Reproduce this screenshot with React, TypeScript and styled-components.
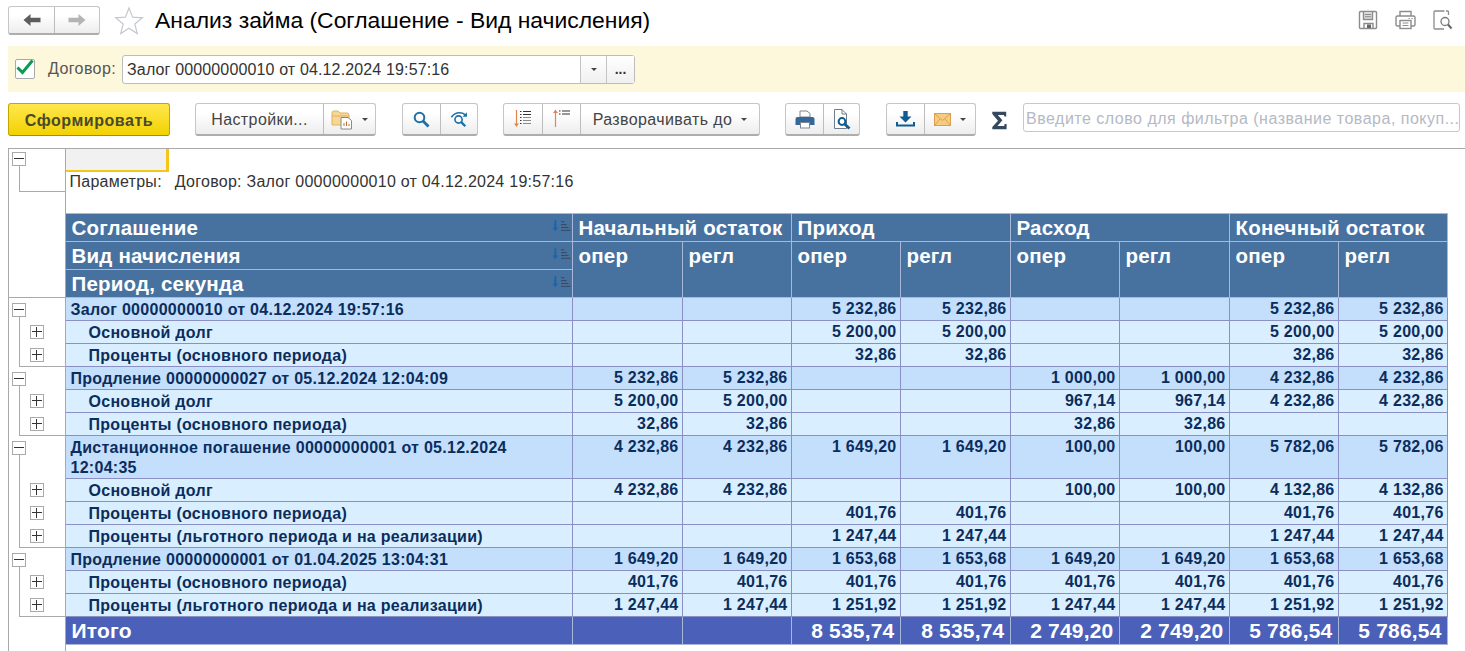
import styled, { createGlobalStyle } from "styled-components";

const GlobalStyle = createGlobalStyle`
    html, body {
        margin: 0;
        padding: 0;
        height: 100%;
        background: #fff;
        overflow: hidden;
    }
    body, button, input {
        font-family: "Liberation Sans", Arial, sans-serif;
    }
`;

const Page = styled.div`
    width: 1465px;
    height: 651px;
    display: flex;
    flex-direction: column;
    overflow: hidden;
`;

const TitleBar = styled.header`
    height: 46px;
    flex: none;
    display: flex;
    align-items: flex-start;
    padding: 6px 12px 0 8px;
    box-sizing: border-box;
`;

const Title = styled.h1`
    margin: 0 0 0 11px;
    font-size: 22.9px;
    line-height: 29px;
    font-weight: 400;
    color: #000;
    white-space: nowrap;
`;

const TitleIcons = styled.div`
    margin-left: auto;
    display: flex;
    gap: 17px;
    padding-top: 4px;
`;

const FilterBand = styled.div`
    height: 46px;
    flex: none;
    margin-left: 8px;
    background: #fdf8dc;
    display: flex;
    align-items: center;
    padding-left: 7px;
    box-sizing: border-box;
`;

const CheckBox = styled.span`
    width: 18px;
    height: 18px;
    border: 1px solid #a9a9a9;
    border-radius: 2px;
    background: #fff;
    display: flex;
    align-items: center;
    justify-content: center;
`;

const FilterLabel = styled.label`
    margin-left: 13px;
    font-size: 16px;
    letter-spacing: 0.4px;
    color: #555;
    white-space: nowrap;
`;

const FilterField = styled.div`
    margin-left: 6px;
    width: 513px;
    height: 29px;
    box-sizing: border-box;
    display: flex;
    background: #fff;
    border: 1px solid #bcbcbc;
    border-radius: 3px;
`;

const FilterValue = styled.div`
    flex: 1;
    padding-left: 4px;
    font-size: 16px;
    letter-spacing: 0.14px;
    line-height: 27px;
    color: #333;
`;

const FieldButton = styled.div<{ $width: number }>`
    width: ${props => props.$width}px;
    border-left: 1px solid #c4c4c4;
    background: linear-gradient(#fff, #f0f0f0);
    display: flex;
    align-items: center;
    justify-content: center;
    color: #333;
    font-size: 14px;
    font-weight: 700;
    line-height: 20px;
`;

const Toolbar = styled.div`
    height: 33px;
    flex: none;
    margin-top: 11px;
    padding-left: 8px;
    display: flex;
    align-items: stretch;
`;

const MainButton = styled.button`
    width: 162px;
    padding: 2px 0 0;
    border: 1px solid #c5a500;
    border-bottom-color: #a78c00;
    border-radius: 3px;
    background: linear-gradient(#ffe74d, #f2d200);
    color: #4a4a2a;
    font-size: 16px;
    letter-spacing: 0.55px;
    font-weight: 700;
`;

const ButtonGroup = styled.div<{ $left: number }>`
    margin-left: ${props => props.$left}px;
    display: flex;
    border: 1px solid #c6c6c6;
    border-bottom: 2px solid #adadad;
    border-radius: 3px;
    background: linear-gradient(#fff 30%, #ededed);
    box-sizing: border-box;
`;

const Segment = styled.div<{ $width: number }>`
    width: ${props => props.$width}px;
    display: flex;
    align-items: center;
    justify-content: center;
    gap: 9px;
    color: #444;
    font-size: 16px;
    letter-spacing: 0.4px;
    white-space: nowrap;
    box-sizing: border-box;
    & + & {
        border-left: 1px solid #bdbdbd;
    }
`;

const SegmentText = styled.span`
    padding-top: 2px;
`;

const Caret = styled.i`
    display: block;
    width: 0;
    height: 0;
    border-left: 3px solid transparent;
    border-right: 3px solid transparent;
    border-top: 3px solid #444;
`;

const SigmaBox = styled.div`
    margin-left: 14px;
    padding-top: 2px;
    width: 18px;
    display: flex;
    align-items: center;
    justify-content: center;
`;

const SearchInput = styled.div`
    margin-left: 15px;
    width: 437px;
    height: 29px;
    align-self: flex-start;
    box-sizing: border-box;
    border: 1px solid #c8c8c8;
    border-radius: 3px;
    padding-left: 2px;
    font-size: 16px;
    line-height: 29px;
    color: #b5b9c4;
    letter-spacing: 0.5px;
    white-space: nowrap;
    overflow: hidden;
`;

const Sheet = styled.div`
    margin: 12px 0 0 8px;
    flex: 1;
    min-height: 0;
    border-top: 1px solid #a9a9a9;
    border-left: 1px solid #a9a9a9;
    overflow: hidden;
`;

const Grid = styled.table`
    border-collapse: collapse;
    table-layout: fixed;
    width: 1438px;
`;

const Gutter = styled.td<{ $h: number; $top?: boolean }>`
    position: relative;
    height: ${props => props.$h}px;
    padding: 0;
    box-sizing: border-box;
    border-right: 1px solid #a9a9a9;
    border-top: ${props => (props.$top ? "1px solid #a9a9a9" : "none")};
`;

const TreeBox = styled.span<{ $x: number; $y: number }>`
    position: absolute;
    left: ${props => props.$x}px;
    top: ${props => props.$y}px;
    width: 14px;
    height: 14px;
    box-sizing: border-box;
    border: 1px solid #a9a9a9;
    background: #fff;
    z-index: 1;
    display: block;
    &::before {
        content: "";
        position: absolute;
        left: 1px;
        right: 1px;
        top: 5px;
        height: 1px;
        background: #333;
    }
`;

const PlusBox = styled(TreeBox)`
    &::after {
        content: "";
        position: absolute;
        top: 1px;
        bottom: 1px;
        left: 5px;
        width: 1px;
        background: #333;
    }
`;

const TreeLine = styled.span<{ $from: number; $to: number; $corner?: boolean }>`
    position: absolute;
    left: 10px;
    right: 0;
    top: ${props => props.$from}px;
    height: ${props => props.$to - props.$from}px;
    box-sizing: border-box;
    border-left: 1px solid #a9a9a9;
    border-bottom: ${props => (props.$corner ? "1px solid #a9a9a9" : "none")};
    ${props => (props.$corner ? "" : "right: auto;")}
`;

const ParamsCell = styled.td`
    height: 64px;
    padding: 0;
    vertical-align: top;
`;

const Tab = styled.div`
    width: 100px;
    height: 21px;
    background: #f1f1f1;
    border-right: 3px solid #f5c518;
    border-bottom: 2px solid #f5c518;
`;

const ParamsLine = styled.div`
    margin-top: 1px;
    padding-left: 4px;
    display: flex;
    gap: 13px;
    font-size: 16px;
    letter-spacing: 0.26px;
    line-height: 17px;
    color: #333;
`;

const HeadCell = styled.th<{ $h?: number }>`
    height: ${props => props.$h ?? 27}px;
    padding: 0 4px 0 6px;
    background: #47729f;
    border: 1px solid #a9b8d8;
    color: #fff;
    font-size: 20.5px;
    letter-spacing: 0.2px;
    line-height: 22px;
    font-weight: 700;
    text-align: left;
    vertical-align: top;
    white-space: nowrap;
    overflow: hidden;
`;

const HeadInner = styled.div`
    display: flex;
    justify-content: space-between;
    align-items: flex-start;
    margin-right: -3px;
    padding-top: 3px;
`;

const HeadText = styled.div`
    padding-top: 3px;
`;

const DataRow = styled.tr<{ $group?: boolean }>`
    td.data {
        background: ${props => (props.$group ? "#c4dffc" : "#d9eeff")};
    }
`;

const LabelCell = styled.td<{ $child?: boolean; $h: number }>`
    height: ${props => props.$h}px;
    padding: 1px ${props => (props.$child ? "4px" : "60px")} 0 ${props => (props.$child ? "23px" : "5px")};
    border: 1px solid #8a90c4;
    color: #0b2d5c;
    font-size: 16px;
    letter-spacing: 0.28px;
    line-height: 20px;
    font-weight: 700;
    box-sizing: border-box;
`;

const NumCell = styled.td`
    padding: 0 3px 0 0;
    border: 1px solid #8a90c4;
    color: #0b2d5c;
    font-size: 16px;
    letter-spacing: 0.28px;
    line-height: 22px;
    font-weight: 700;
    text-align: right;
    vertical-align: top;
    white-space: nowrap;
`;

const TotalLabel = styled.td`
    height: 26px;
    padding: 1px 5px 0 6px;
    background: #4b60b8;
    border: 1px solid #a9b8d8;
    color: #fff;
    font-size: 21px;
    letter-spacing: 0.2px;
    line-height: 24px;
    font-weight: 700;
`;

const TotalNum = styled(TotalLabel)`
    padding: 1px 5px 0 0;
    text-align: right;
    white-space: nowrap;
`;

const Filler = styled.td`
    height: 12px;
    padding: 0;
    border-right: 1px solid #a9a9a9;
`;

function BackIcon({ color }: { color: string }) {
    return (
        <svg width="18" height="14" viewBox="0 0 18 14">
            <path d="M0.5 7 7.5 1V4.8H17.5V9.2H7.5V13Z" fill={color} />
        </svg>
    );
}

function ForwardIcon({ color }: { color: string }) {
    return (
        <svg width="18" height="14" viewBox="0 0 18 14">
            <path d="M17.5 7 10.5 1V4.8H0.5V9.2H10.5V13Z" fill={color} />
        </svg>
    );
}

function Star() {
    return (
        <svg width="30" height="30" viewBox="0 0 30 30" style={{ marginLeft: 14 }}>
            <path
                d="M15 2 18.6 11.2 28.4 11.8 20.8 18 23.3 27.6 15 22.3 6.7 27.6 9.2 18 1.6 11.8 11.4 11.2Z"
                fill="#fff"
                stroke="#c4c8cf"
                strokeWidth="1.2"
            />
        </svg>
    );
}

function SaveIcon() {
    return (
        <svg width="20" height="20" viewBox="0 0 20 20" fill="none" stroke="#8c8c8c" strokeWidth="1.4">
            <path d="M2.5 1.5H17.5Q18.5 1.5 18.5 2.5V17.5Q18.5 18.5 17.5 18.5H2.5Q1.5 18.5 1.5 17.5V2.5Q1.5 1.5 2.5 1.5Z" />
            <path d="M5.5 2V9.5H14.5V2" fill="#dcdcdc" />
            <path d="M7 4.5H13M7 6.7H13" strokeWidth="1" />
            <path d="M6 18V13.5H15V18" />
            <rect x="9" y="14.5" width="4" height="3.5" fill="#666" stroke="none" />
        </svg>
    );
}

function PrintGrayIcon() {
    return (
        <svg width="21" height="20" viewBox="0 0 21 20" fill="none" stroke="#8c8c8c" strokeWidth="1.4">
            <path d="M5 6V1.5H16V6" />
            <path d="M5 16H2.5Q1 16 1 14.5V7.5Q1 6 2.5 6H18.5Q20 6 20 7.5V14.5Q20 16 18.5 16H16" />
            <rect x="5" y="10.5" width="11" height="8" fill="#fff" />
            <path d="M7.5 13H13.5M7.5 15.5H13.5" strokeWidth="1" />
            <path d="M13.5 8.5H14.8M16.5 8.5H17.8" strokeWidth="1.2" />
        </svg>
    );
}

function ViewGrayIcon() {
    return (
        <svg width="20" height="20" viewBox="0 0 20 20" fill="none" stroke="#8c8c8c" strokeWidth="1.3">
            <path d="M11.5 1H2Q1 1 1 2V18Q1 19 2 19H11" />
            <path d="M13 1H14.5Q15.5 1 15.5 2V5" />
            <circle cx="12" cy="11.5" r="4" stroke="#7a7a7a" />
            <path d="M15 14.5 18.5 18.5" strokeWidth="2" stroke="#666" />
        </svg>
    );
}

function CheckMark() {
    return (
        <svg width="18" height="16" viewBox="0 0 18 16" style={{ marginTop: -4 }}>
            <path d="M1.5 8.5 6.5 13.5 16.5 1.5" fill="none" stroke="#0c9a4e" strokeWidth="3" />
        </svg>
    );
}

function FolderIcon() {
    return (
        <svg width="22" height="21" viewBox="0 0 22 21">
            <path d="M1 4Q1 2 3 2H7L9 4H16Q18 4 18 6V16H1Z" fill="#f6d795" stroke="#e0b25e" />
            <path d="M1 7H18" stroke="#e0b25e" />
            <path d="M10 8.5H17L20.5 11.5V20H10Z" fill="#fff" stroke="#8a8a8a" />
            <path d="M13 17V14M15.5 17V12.5M18 17V15" stroke="#c76a2a" strokeWidth="1" />
        </svg>
    );
}

function SearchIcon() {
    return (
        <svg width="17" height="17" viewBox="0 0 17 17" fill="none" stroke="#1d6fa8" strokeWidth="2">
            <circle cx="6.5" cy="6.5" r="4.8" />
            <path d="M10 10 15.5 15.5" strokeWidth="2.8" />
        </svg>
    );
}

function SearchAgainIcon() {
    return (
        <svg width="18" height="17" viewBox="0 0 20 18" fill="none" stroke="#1d6fa8" strokeWidth="1.8">
            <path d="M1.5 6.5Q5 1.5 10.5 1.5 15 1.5 17.5 4.5" />
            <path d="M18.8 1V6H14Z" fill="#1d6fa8" stroke="none" />
            <circle cx="9.5" cy="9" r="4" />
            <path d="M12.5 12 17 16.5" strokeWidth="2.6" />
        </svg>
    );
}

function ExpandDownIcon() {
    return (
        <svg width="18" height="18" viewBox="0 0 18 18">
            <path d="M2.5 0V15" stroke="#e8834a" strokeWidth="1.2" />
            <path d="M0 13.5H5L2.5 17Z" fill="#e8834a" />
            <path d="M6 1.5H7.5M6 4.5H7.5M6 7.5H7.5M6 10.5H7.5M6 13.5H7.5" stroke="#333" strokeWidth="1.2" />
            <path d="M9 1.5H17M9 4.5H17" stroke="#333" strokeWidth="1.2" />
            <path d="M9 7.5H17M9 10.5H17M9 13.5H17" stroke="#8b8b8b" strokeWidth="1.2" />
        </svg>
    );
}

function ExpandUpIcon() {
    return (
        <svg width="18" height="18" viewBox="0 0 18 18" style={{ marginTop: -2 }}>
            <path d="M2.5 3V18" stroke="#e8834a" strokeWidth="1.2" />
            <path d="M0 4H5L2.5 0.5Z" fill="#e8834a" />
            <path d="M6 2H7.5M6 5H7.5" stroke="#333" strokeWidth="1.2" />
            <path d="M9 2H17M9 5H17" stroke="#333" strokeWidth="1.2" />
        </svg>
    );
}

function PrintIcon() {
    return (
        <svg width="20" height="19" viewBox="0 0 20 19">
            <path d="M5 7V1H12L15 3.5V7Z" fill="#fff" stroke="#7d8794" />
            <path d="M2.5 7H17.5Q19.5 7 19.5 9V15H15V12H5V15H0.5V9Q0.5 7 2.5 7Z" fill="#34689a" />
            <rect x="5.5" y="12.5" width="9" height="5.5" fill="#fff" stroke="#7d8794" />
        </svg>
    );
}

function PreviewIcon() {
    return (
        <svg width="18" height="21" viewBox="0 0 18 21">
            <path d="M1.5 0.5H9L13.5 5V19.5H1.5Z" fill="#fff" stroke="#6f7c8b" />
            <path d="M9 0.5V5H13.5" fill="none" stroke="#6f7c8b" />
            <circle cx="9" cy="12.5" r="3.4" fill="#fff" stroke="#0d5d92" strokeWidth="2" />
            <path d="M11.5 15 16.5 19.5" stroke="#0d5d92" strokeWidth="2.8" />
        </svg>
    );
}

function DownloadIcon() {
    return (
        <svg width="19" height="16" viewBox="0 0 19 16">
            <path d="M7.3 0H11.7V5.5H15.5L9.5 11.5 3.5 5.5H7.3Z" fill="#0f5c94" />
            <path d="M1 11V14.5H18V11" fill="none" stroke="#0f5c94" strokeWidth="2" />
        </svg>
    );
}

function MailIcon() {
    return (
        <svg width="17" height="13" viewBox="0 0 17 13">
            <rect x="0.5" y="0.5" width="16" height="12" fill="#f5cd82" stroke="#dd9f4e" />
            <path d="M0.5 0.5 8.5 7.5 16.5 0.5M0.5 12.5 6 6M16.5 12.5 11 6" fill="none" stroke="#dd9f4e" />
        </svg>
    );
}

function SigmaIcon() {
    return (
        <svg width="15" height="19" viewBox="0 0 15 18">
            <path d="M0.3 0.3H14.2V5H12.3L12 3.4H5.8L10.4 8.8 5.4 14.4H12.2L12.6 12.6H14.6V17.7H0.3V15.6L6 9.2 0.3 2.4Z" fill="#34495e" />
        </svg>
    );
}

function SortIcon() {
    return (
        <svg width="19" height="13" viewBox="0 0 20 13" style={{ flex: "none", marginTop: 3 }}>
            <path d="M3.5 0V8" stroke="#1765ad" strokeWidth="2" />
            <path d="M0.5 7.5H6.5L3.5 11.5Z" fill="#1765ad" />
            <path d="M9.5 1.5H13M9.5 4.5H15.5M9.5 7.5H17.5M9.5 10.5H19.5" stroke="#3a4654" strokeWidth="1" />
        </svg>
    );
}

interface RowData {
    label: string;
    group?: boolean;
    last?: boolean;
    tall?: boolean;
    values: string[];
}

const rows: RowData[] = [
    { label: "Залог 00000000010 от 04.12.2024 19:57:16", group: true, values: ["", "", "5 232,86", "5 232,86", "", "", "5 232,86", "5 232,86"] },
    { label: "Основной долг", values: ["", "", "5 200,00", "5 200,00", "", "", "5 200,00", "5 200,00"] },
    { label: "Проценты (основного периода)", last: true, values: ["", "", "32,86", "32,86", "", "", "32,86", "32,86"] },
    { label: "Продление 00000000027 от 05.12.2024 12:04:09", group: true, values: ["5 232,86", "5 232,86", "", "", "1 000,00", "1 000,00", "4 232,86", "4 232,86"] },
    { label: "Основной долг", values: ["5 200,00", "5 200,00", "", "", "967,14", "967,14", "4 232,86", "4 232,86"] },
    { label: "Проценты (основного периода)", last: true, values: ["32,86", "32,86", "", "", "32,86", "32,86", "", ""] },
    { label: "Дистанционное погашение 00000000001 от 05.12.2024 12:04:35", group: true, tall: true, values: ["4 232,86", "4 232,86", "1 649,20", "1 649,20", "100,00", "100,00", "5 782,06", "5 782,06"] },
    { label: "Основной долг", values: ["4 232,86", "4 232,86", "", "", "100,00", "100,00", "4 132,86", "4 132,86"] },
    { label: "Проценты (основного периода)", values: ["", "", "401,76", "401,76", "", "", "401,76", "401,76"] },
    { label: "Проценты (льготного периода и на реализации)", last: true, values: ["", "", "1 247,44", "1 247,44", "", "", "1 247,44", "1 247,44"] },
    { label: "Продление 00000000001 от 01.04.2025 13:04:31", group: true, values: ["1 649,20", "1 649,20", "1 653,68", "1 653,68", "1 649,20", "1 649,20", "1 653,68", "1 653,68"] },
    { label: "Проценты (основного периода)", values: ["401,76", "401,76", "401,76", "401,76", "401,76", "401,76", "401,76", "401,76"] },
    { label: "Проценты (льготного периода и на реализации)", last: true, values: ["1 247,44", "1 247,44", "1 251,92", "1 251,92", "1 247,44", "1 247,44", "1 251,92", "1 251,92"] },
];

const totals = ["8 535,74", "8 535,74", "2 749,20", "2 749,20", "5 786,54", "5 786,54"];
const colWidths = [56, 507, 110, 109, 109, 110, 109, 110, 109, 109];

function TreeCell({ row, top }: { row: RowData; top: boolean }) {
    const height = row.tall ? 43 : 23;
    if (row.group) {
        return (
            <Gutter $h={height} $top={top}>
                <TreeBox $x={3} $y={5} />
                <TreeLine $from={12} $to={height} />
            </Gutter>
        );
    }
    return (
        <Gutter $h={height}>
            <PlusBox $x={21} $y={4} />
            <TreeLine $from={0} $to={height} $corner={row.last} />
        </Gutter>
    );
}

export default function App() {
    return (
        <Page>
            <GlobalStyle />
            <TitleBar>
                <ButtonGroup $left={0} style={{ height: 29 }}>
                    <Segment $width={45}><BackIcon color="#5d5d5d" /></Segment>
                    <Segment $width={45}><ForwardIcon color="#b4b4b4" /></Segment>
                </ButtonGroup>
                <Star />
                <Title>Анализ займа (Соглашение - Вид начисления)</Title>
                <TitleIcons>
                    <SaveIcon />
                    <PrintGrayIcon />
                    <ViewGrayIcon />
                </TitleIcons>
            </TitleBar>
            <FilterBand>
                <CheckBox><CheckMark /></CheckBox>
                <FilterLabel>Договор:</FilterLabel>
                <FilterField>
                    <FilterValue>Залог 00000000010 от 04.12.2024 19:57:16</FilterValue>
                    <FieldButton $width={25}><Caret /></FieldButton>
                    <FieldButton $width={27}>...</FieldButton>
                </FilterField>
            </FilterBand>
            <Toolbar>
                <MainButton>Сформировать</MainButton>
                <ButtonGroup $left={25}>
                    <Segment $width={127}><SegmentText>Настройки...</SegmentText></Segment>
                    <Segment $width={52}><FolderIcon /><Caret /></Segment>
                </ButtonGroup>
                <ButtonGroup $left={26}>
                    <Segment $width={37}><SearchIcon /></Segment>
                    <Segment $width={37}><SearchAgainIcon /></Segment>
                </ButtonGroup>
                <ButtonGroup $left={25}>
                    <Segment $width={38}><ExpandDownIcon /></Segment>
                    <Segment $width={38}><ExpandUpIcon /></Segment>
                    <Segment $width={179}><SegmentText>Разворачивать до</SegmentText><Caret /></Segment>
                </ButtonGroup>
                <ButtonGroup $left={25}>
                    <Segment $width={37}><PrintIcon /></Segment>
                    <Segment $width={36}><PreviewIcon /></Segment>
                </ButtonGroup>
                <ButtonGroup $left={26}>
                    <Segment $width={37}><DownloadIcon /></Segment>
                    <Segment $width={51}><MailIcon /><Caret /></Segment>
                </ButtonGroup>
                <SigmaBox><SigmaIcon /></SigmaBox>
                <SearchInput>Введите слово для фильтра (название товара, покуп...</SearchInput>
            </Toolbar>
            <Sheet>
                <Grid>
                    <colgroup>
                        {colWidths.map((w, i) => <col key={i} style={{ width: w }} />)}
                    </colgroup>
                    <tbody>
                        <tr>
                            <Gutter $h={64}>
                                <TreeBox $x={3} $y={3} />
                                <TreeLine $from={10} $to={43} $corner />
                            </Gutter>
                            <ParamsCell colSpan={9}>
                                <Tab />
                                <ParamsLine>
                                    <span>Параметры:</span>
                                    <span>Договор: Залог 00000000010 от 04.12.2024 19:57:16</span>
                                </ParamsLine>
                            </ParamsCell>
                        </tr>
                        <tr>
                            <Gutter $h={27} />
                            <HeadCell><HeadInner>Соглашение<SortIcon /></HeadInner></HeadCell>
                            <HeadCell colSpan={2}><HeadText>Начальный остаток</HeadText></HeadCell>
                            <HeadCell colSpan={2}><HeadText>Приход</HeadText></HeadCell>
                            <HeadCell colSpan={2}><HeadText>Расход</HeadText></HeadCell>
                            <HeadCell colSpan={2}><HeadText>Конечный остаток</HeadText></HeadCell>
                        </tr>
                        <tr>
                            <Gutter $h={27} />
                            <HeadCell><HeadInner>Вид начисления<SortIcon /></HeadInner></HeadCell>
                            {Array.from({ length: 8 }).map((_, i) => (
                                <HeadCell key={i} rowSpan={2}><HeadText>{i % 2 === 0 ? "опер" : "регл"}</HeadText></HeadCell>
                            ))}
                        </tr>
                        <tr>
                            <Gutter $h={27} />
                            <HeadCell><HeadInner>Период, секунда<SortIcon /></HeadInner></HeadCell>
                        </tr>
                        {rows.map((row, i) => (
                            <DataRow key={i} $group={row.group}>
                                <TreeCell row={row} top={i === 0} />
                                <LabelCell className="data" $h={row.tall ? 43 : 23} $child={!row.group}>{row.label}</LabelCell>
                                {row.values.map((v, j) => <NumCell className="data" key={j}>{v}</NumCell>)}
                            </DataRow>
                        ))}
                        <tr>
                            <Gutter $h={27} />
                            <TotalLabel>Итого</TotalLabel>
                            <TotalNum />
                            <TotalNum />
                            {totals.map((v, i) => <TotalNum key={i}>{v}</TotalNum>)}
                        </tr>
                        <tr>
                            <Filler />
                        </tr>
                    </tbody>
                </Grid>
            </Sheet>
        </Page>
    );
}
